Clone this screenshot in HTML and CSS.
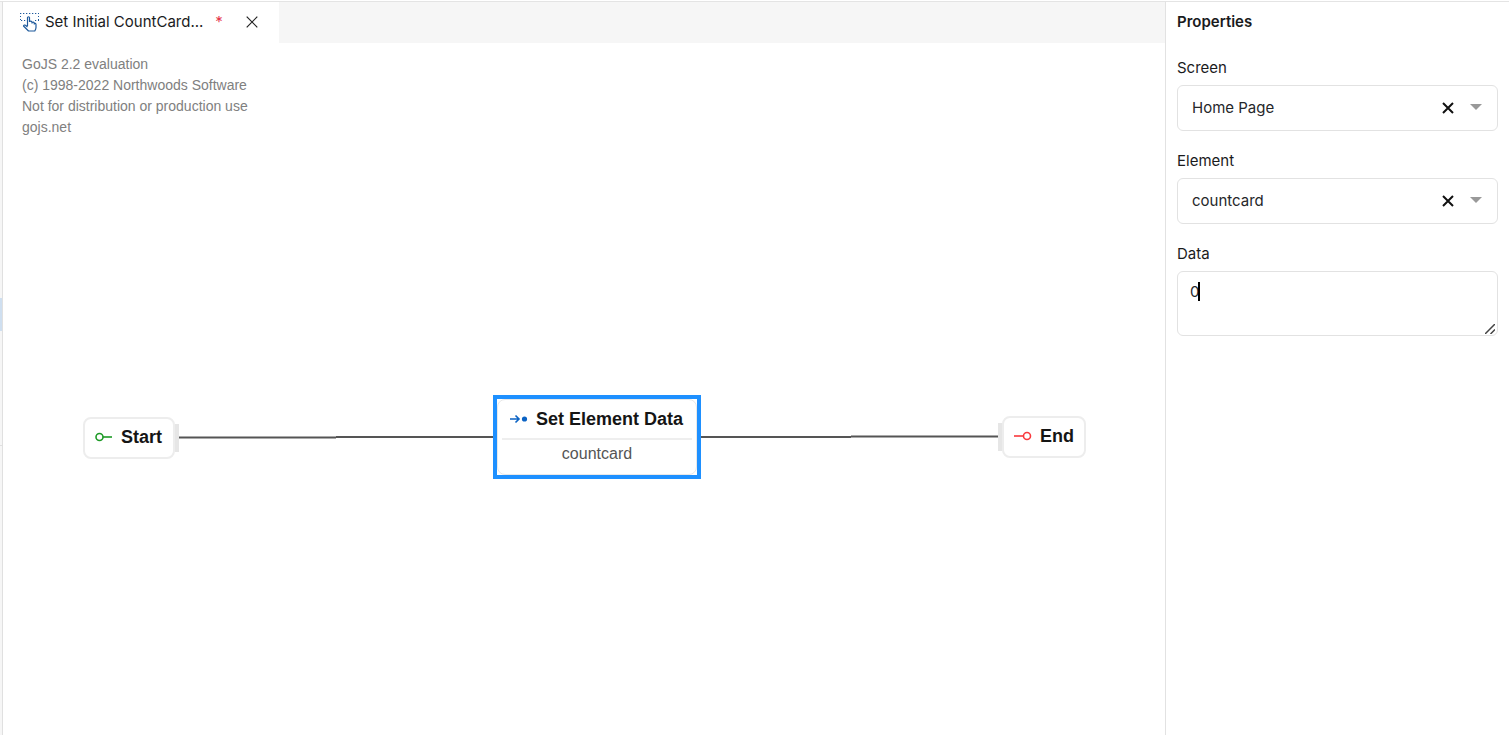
FILE: index.html
```html
<!DOCTYPE html>
<html lang="en">
<head>
<meta charset="utf-8">
<title>Set Initial CountCard</title>
<link rel="stylesheet" href="styles.css">
</head>
<body>
<div class="app">
  <div class="rail"><div class="rail-space"></div><div class="rail-active"></div><div class="rail-gap"></div><div class="rail-line"></div></div>
  <main class="editor">
    <div class="tabs">
      <div class="tab">
        <svg class="tab-icon" viewBox="0 0 20 20" fill="none" stroke="#1f5a9c">
          <path d="M0 1.500H19" stroke-width="1" stroke-dasharray="1.300 1.700"/>
          <path d="M.500 4V9M18.500 4V9" stroke-width="1" stroke-dasharray="1 2"/>
          <path d="M1 8.500H6M15 8.500H19" stroke-width="1" stroke-dasharray="1.200 1.800"/>
          <path d="M7.500 14V5.500Q8.500 4 9.500 5.500V10M9.500 10V9.500Q11 8.500 12 10V11.500M12 10.500Q13.500 9.500 14.300 11V12.500M14.300 11.200Q16 11 16 12.500V15.500Q16 17 14.800 19H8.500L3.500 14Q4 12.500 5.500 13.300L7.500 15" stroke-width="1.200" stroke-linejoin="round"/>
        </svg>
        <span class="tab-title">Set Initial CountCard...</span>
        <span class="dirty">*</span>
        <button class="tab-close" type="button" aria-label="Close tab"><svg viewBox="0 0 12 12" width="12" height="12" fill="none" stroke="#222" stroke-width="1.200"><path d="M.700.700L11.300 11.300M11.300.700L.700 11.300"/></svg></button>
      </div>
    </div>
    <section class="canvas">
      <p class="watermark">GoJS 2.2 evaluation<br>(c) 1998-2022 Northwoods Software<br>Not for distribution or production use<br>gojs.net</p>
      <svg class="links" width="1100" height="500" fill="none" stroke="#555" stroke-width="2">
        <path d="M176 394.500H333M333 394H490M698 394H848M848 393.500H995"/>
      </svg>
      <div class="node start">
        <svg viewBox="0 0 18 10" width="18" height="10" fill="none" stroke="#1d9a26" stroke-width="1.600"><circle cx="4.500" cy="5" r="3.500"/><path d="M8 5H17"/></svg>
        <span>Start</span><i class="port port-right"></i>
      </div>
      <div class="node action">
        <div class="action-body">
          <div class="action-head">
            <svg viewBox="0 0 18 10" width="18" height="10" fill="none" stroke="#0b63c4" stroke-width="1.600"><path d="M0 5H9M5.500 1.500L9 5L5.500 8.500"/><circle cx="14.500" cy="5" r="2.600" fill="#0b63c4" stroke="none"/></svg>
            <span>Set Element Data</span>
          </div>
          <div class="action-sub">countcard</div>
        </div>
      </div>
      <div class="node end">
        <svg viewBox="0 0 18 10" width="18" height="10" fill="none" stroke="#f9393d" stroke-width="1.600"><circle cx="13" cy="5" r="3.500"/><path d="M0 5H9.500"/></svg>
        <span>End</span><i class="port port-left"></i>
      </div>
    </section>
  </main>
  <aside class="panel">
    <h2 class="panel-title">Properties</h2>
    <div class="field">
      <label for="screen">Screen</label>
      <div class="control">
        <select id="screen"><option>Home Page</option></select>
        <button class="clear" type="button" aria-label="Clear screen"><svg viewBox="0 0 12 12" width="12" height="12" stroke="#111" stroke-width="2"><path d="M1 1L11 11M11 1L1 11"/></svg></button>
        <i class="arrow"></i>
      </div>
    </div>
    <div class="field">
      <label for="element">Element</label>
      <div class="control">
        <select id="element"><option>countcard</option></select>
        <button class="clear" type="button" aria-label="Clear element"><svg viewBox="0 0 12 12" width="12" height="12" stroke="#111" stroke-width="2"><path d="M1 1L11 11M11 1L1 11"/></svg></button>
        <i class="arrow"></i>
      </div>
    </div>
    <div class="field">
      <label for="data">Data</label>
      <div class="control">
        <textarea id="data">0</textarea>
        <i class="caret"></i>
        <svg class="grip" viewBox="0 0 10 10" width="10" height="10" stroke="#444" stroke-width="1.500"><path d="M0 10L10 0M5.500 10L10 5.500"/></svg>
      </div>
    </div>
  </aside>
</div>
</body>
</html>
```
FILE: styles.css
```css
* { box-sizing: border-box; }
body { margin: 0; font: 15px/20px Inter, "Liberation Sans", sans-serif; color: #1a1b1d; background: #fff; }
button { border: 0; padding: 0; background: none; display: flex; }
.app { display: flex; min-height: 100vh; padding-top: 1px; }
.app > * { border-top: 1px solid #e4e4e4; }
.rail { flex: none; width: 3px; border-right: 1px solid #e0e0e0; background: #f6f6f6; }
.rail-space { height: 296px; }
.rail-active { height: 33px; background: #cfdff0; }
.rail-gap { height: 114px; }
.rail-line { height: 1px; background: #e0e0e0; }
.editor { flex: 1; min-width: 0; display: flex; flex-direction: column; }
.tabs { display: flex; background: #f6f6f6; }
.tab { display: flex; align-items: center; width: 276px; height: 41px; padding: 0 0 2px 17px; background: #fff; }
.tab-icon { width: 20px; height: 20px; margin-right: 5px; }
.dirty { margin-left: 12px; color: #e5384b; }
.tab-close { margin-left: 23px; }
.canvas { position: relative; flex: 1; overflow: hidden; font-family: "Liberation Sans", Arial, sans-serif; }
.watermark { margin: 0; padding: 11px 19px; font-size: 14px; line-height: 21px; color: #808080; }
.links { position: absolute; left: 0; top: 0; }
.node { position: absolute; background: #fff; font-size: 18px; font-weight: bold; color: #151515; }
.start, .end { display: flex; align-items: center; gap: 8px; height: 42px; padding: 0 10px 2px; border: 2px solid #ededed; border-radius: 8px; }
.start { left: 80px; top: 374px; width: 92px; }
.end { left: 999px; top: 373px; }
.port { position: absolute; top: 5px; width: 4px; height: 28px; background: #e6e6e6; }
.port-right { left: 100%; margin-left: 2px; }
.port-left { right: 100%; margin-right: 2px; }
.action { left: 490px; top: 352px; width: 208px; height: 84px; border: 4px solid #1e90ff; }
.action-body { height: 100%; border: 1px solid #e8e8e8; border-radius: 8px; padding: 0 4px; }
.action-head { display: flex; align-items: center; gap: 8px; height: 40px; padding-left: 8px; border-bottom: 2px solid #eee; white-space: nowrap; }
.action-sub { padding-top: 4px; text-align: center; font-size: 16px; font-weight: normal; color: #555; }
.panel { flex: none; width: 344px; padding: 10px 11px; border-left: 1px solid #e2e2e2; }
.panel-title { margin: 0 0 26px; font-size: 15px; line-height: 20px; font-weight: 600; }
.field { margin-bottom: 20px; }
.field label { display: block; margin-bottom: 7px; }
.control { position: relative; display: flex; }
select, textarea { appearance: none; width: 100%; font: inherit; color: #26272a; background: #fff; border: 1px solid #e2e2e2; border-radius: 6px; outline: 0; }
select { height: 46px; padding: 0 70px 0 14px; }
textarea { height: 65px; padding: 10px 12px; resize: none; display: block; }
.clear { position: absolute; right: 44px; top: 17px; }
.arrow { position: absolute; right: 16px; top: 19px; border: 6px solid transparent; border-top-color: #999; border-bottom: 0; }
.caret { position: absolute; left: 21px; top: 11px; width: 2px; height: 19px; background: #000; }
.grip { position: absolute; right: 3px; bottom: 2px; }
```
